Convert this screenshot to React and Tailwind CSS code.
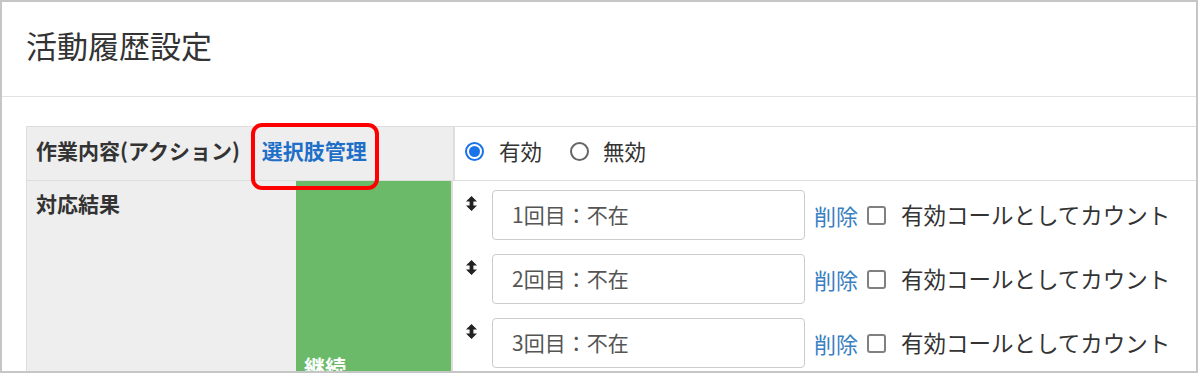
import React from "react";

const font = { fontFamily: '"Noto Sans CJK JP", "Noto Sans", sans-serif' };

function Grip() {
  return (
    <svg width="11" height="15" viewBox="0 0 11 15" className="shrink-0 mt-[6px]">
      <path d="M5.5 0 L11 5.5 L7.4 5.5 L7.4 9.5 L11 9.5 L5.5 15 L0 9.5 L3.6 9.5 L3.6 5.5 L0 5.5 Z" fill="#222" />
    </svg>
  );
}

function CallRow({ label }) {
  return (
    <div className="flex items-start h-[50px] shrink-0">
      <div className="w-[39px] shrink-0 flex justify-center pr-[2px]">
        <Grip />
      </div>
      <div className="w-[313px] shrink-0 h-[50px] border border-[#cccccc] rounded-[4px] flex items-center pl-[19px] text-[#555] text-[21px]">
        {label}
      </div>
      <div className="flex items-center h-[50px] shrink-0 whitespace-nowrap">
        <span className="ml-[9px] text-[#3a7fc2] text-[22px]">削除</span>
        <span className="ml-[9px] w-[19px] h-[19px] shrink-0 border-2 border-[#808080] rounded-[3px] bg-white" />
        <span className="ml-[15px] text-[#333] text-[22.5px]">有効コールとしてカウント</span>
      </div>
    </div>
  );
}

export default function App() {
  const rows = ["1回目：不在", "2回目：不在", "3回目：不在"];

  return (
    <div
      className="w-[1198px] h-[373px] border-2 border-[#c6c6c6] bg-white overflow-hidden relative"
      style={font}
    >
      {/* Header */}
      <div className="h-[95px] border-b border-[#e2e2e2] flex items-center pl-[24px] pb-[8px]">
        <h1 className="text-[31px] text-[#333] font-normal">活動履歴設定</h1>
      </div>

      {/* Settings table */}
      <div className="pt-[29px] pl-[24px]">
        <div className="border-t border-l border-[#dddddd]">
          {/* Row 1 */}
          <div className="flex h-[54px] border-b border-[#dddddd]">
            <div className="w-[428px] shrink-0 bg-[#eeeeee] border-r-2 border-[#dddddd] flex items-center pl-[9px] pb-[5px] font-bold text-[21px]">
              <span className="text-[#333]">作業内容(アクション)</span>
              <span className="ml-[22px] text-[#1e6fc8]">選択肢管理</span>
            </div>
            <div className="flex items-center pl-[10px] pb-[4px] text-[21.5px] text-[#333]">
              <span className="w-[19px] h-[19px] shrink-0 rounded-full border-2 border-[#1a73e8] flex items-center justify-center">
                <span className="w-[11px] h-[11px] rounded-full bg-[#1a73e8]" />
              </span>
              <span className="ml-[15px]">有効</span>
              <span className="ml-[28px] w-[19px] h-[19px] shrink-0 rounded-full border-2 border-[#666]" />
              <span className="ml-[14px]">無効</span>
            </div>
          </div>

          {/* Row 2 */}
          <div className="flex h-[400px]">
            <div className="w-[269px] shrink-0 bg-[#eeeeee] pl-[9px] pt-[7px] font-bold text-[21px] text-[#333]">
              対応結果
            </div>
            <div className="w-[157px] shrink-0 bg-[#6bba6a] border-r-2 border-[#dddddd] pl-[8px] pt-[170px] font-bold text-[21px] text-white">
              継続
            </div>
            <div className="flex flex-col gap-[14px] pt-[9px] shrink-0">
              {rows.map((r) => (
                <CallRow key={r} label={r} />
              ))}
            </div>
          </div>
        </div>
      </div>

      {/* Highlight box */}
      <div className="absolute left-[249px] top-[121px] w-[128px] h-[67px] border-[4px] border-[#ff0000] rounded-[11px]" />
    </div>
  );
}
